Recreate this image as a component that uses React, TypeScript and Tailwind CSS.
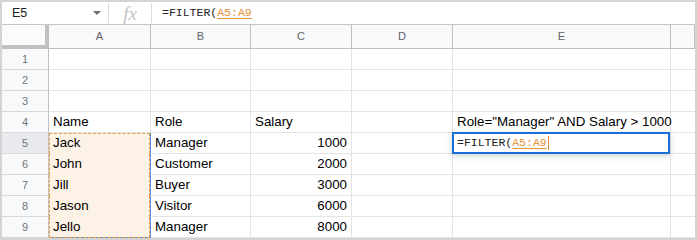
import React from 'react'

const ROWS: string[][] = [
  ['', '', '', '', ''],
  ['', '', '', '', ''],
  ['', '', '', '', ''],
  ['Name', 'Role', 'Salary', '', 'Role="Manager" AND Salary > 1000'],
  ['Jack', 'Manager', '1000', '', ''],
  ['John', 'Customer', '2000', '', ''],
  ['Jill', 'Buyer', '3000', '', ''],
  ['Jason', 'Visitor', '6000', '', ''],
  ['Jello', 'Manager', '8000', '', ''],
]

const HEADERS = ['A', 'B', 'C', 'D', 'E', '']

function Formula() {
  return (
    <span className="font-['Liberation_Mono',monospace] text-[11.5px] whitespace-nowrap">
      <span className="text-[#222]">=FILTER(</span>
      <span className="text-[#e69138] underline decoration-[#e69138] underline-offset-2">A5:A9</span>
    </span>
  )
}

export default function App() {
  return (
    <div className="w-[697px] h-[240px] border-2 border-[#d4d4d4] bg-white overflow-hidden font-['Liberation_Sans',Arial,sans-serif] text-black">
      {/* formula bar */}
      <div className="flex h-[23px] border-b border-[#c7c7c7]">
        <div className="flex w-[106px] items-center justify-between pl-[10px] pr-[7px]">
          <span className="text-[12.5px] text-[#202124]">E5</span>
          <span className="h-0 w-0 border-x-[4px] border-t-[4px] border-x-transparent border-t-[#6b6e72]" />
        </div>
        <div className="my-[1px] w-px bg-[#dadce0]" />
        <div className="flex w-[42px] items-center justify-center">
          <span className="font-['Liberation_Serif',serif] italic text-[19px] leading-none text-[#c4c4c4]">fx</span>
        </div>
        <div className="my-[1px] w-px bg-[#dadce0]" />
        <div className="flex items-center pl-[10px]">
          <Formula />
        </div>
      </div>

      {/* sheet grid */}
      <div className="grid grid-cols-[47px_102px_100px_101px_101px_218px_24px]">
        {/* corner */}
        <div className="h-[24px] bg-[#c0c0c0] pr-[4px] pb-[4px]">
          <div className="h-full w-full bg-[#fbfbfb]" />
        </div>
        {HEADERS.map((h, i) => (
          <div
            key={i}
            className="flex h-[24px] items-center justify-center border-r border-b border-[#c0c0c0] bg-[#f8f9fa] text-[11px] text-[#5f6368]"
          >
            {h}
          </div>
        ))}

        {ROWS.map((row, r) => {
          const n = r + 1
          const inRange = n >= 5 && n <= 9
          return (
            <React.Fragment key={n}>
              <div
                className={`flex h-[21px] items-center justify-center border-r border-b border-r-[#c0c0c0] border-b-[#d9d9d9] text-[11px] text-[#70757a] ${
                  n === 5 ? 'bg-[#e8eaed]' : 'bg-[#f8f9fa]'
                }`}
              >
                {n}
              </div>
              {row.map((v, c) => {
                const numeric = c === 2 && n >= 5
                const rangeCell = c === 0 && inRange
                const active = c === 4 && n === 5
                return (
                  <div
                    key={c}
                    className={`relative flex h-[21px] items-center border-r border-b text-[13.33px] leading-4 whitespace-nowrap ${
                      numeric ? 'justify-end pr-[4px]' : 'pl-[4px]'
                    } ${
                      rangeCell
                        ? `bg-[#fdf2e6] border-r-[#5b8ad8] ${n === 9 ? 'border-b-[#5b8ad8]' : 'border-b-[#fdf2e6]'}`
                        : 'border-[#e2e3e3]'
                    }`}
                  >
                    {rangeCell && (
                      <div
                        className={`pointer-events-none absolute inset-x-0 -bottom-px top-0 border-x border-dashed border-[#e8a14b] ${
                          n === 5 ? 'border-t' : ''
                        } ${n === 9 ? 'border-b' : ''}`}
                      />
                    )}
                    {active ? (
                      <>
                        <div className="pointer-events-none absolute -top-[1px] -left-[1px] right-0 -bottom-[1px] border-2 border-[#1a6ed8] shadow-[0_2px_6px_rgba(60,64,67,0.25)]" />
                        <div className="relative flex items-center">
                          <Formula />
                          <span className="ml-px h-[14px] w-px bg-[#e69138]" />
                        </div>
                      </>
                    ) : (
                      <span className="relative">{v}</span>
                    )}
                  </div>
                )
              })}
              <div className="h-[21px] border-b border-[#e2e3e3]" />
            </React.Fragment>
          )
        })}
      </div>
    </div>
  )
}
